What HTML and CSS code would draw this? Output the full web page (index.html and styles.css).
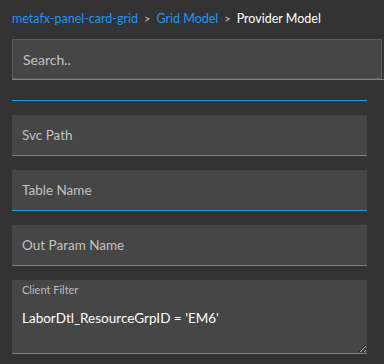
FILE: index.html
```html
<!DOCTYPE html>
<html lang="en">

<head>
    <meta name="viewport" content="width=device-width, initial-scale=1">
    <link rel="stylesheet" href="styles.css">
</head>

<body>

    <!-- Breadcrumb trail -->
    <div class="crumbs">
        <a href="#" class="crumb-link">metafx-panel-card-grid</a>
        <span class="crumb-sep">&gt;</span>
        <a href="#" class="crumb-link">Grid Model</a>
        <span class="crumb-sep">&gt;</span>
        <span class="crumb-current">Provider Model</span>
    </div>

    <!-- Search box -->
    <div class="search-wrap">
        <input type="text" class="search" placeholder="Search..">
    </div>

    <!-- Provider fields -->
    <div class="fields">
        <div class="empty-field"></div>
        <input type="text" class="field" placeholder="Svc Path">
        <input type="text" class="field" placeholder="Table Name">
        <input type="text" class="field" placeholder="Out Param Name">

        <div class="area-field">
            <label class="area-label" for="clientFilter">Client Filter</label>
            <textarea id="clientFilter" class="area">LaborDtl_ResourceGrpID = 'EM6'</textarea>
        </div>
    </div>

</body>

</html>
```

FILE: styles.css
```css
body {
    font-family: "Source Sans Pro", "Lato", "Noto Sans", sans-serif;
    margin: 0;
    padding: 0 17px 0 12px;
    background-color: #333333;
    color: #c4c4c4;
}

* {
    box-sizing: border-box;
}

/* Breadcrumb trail */
.crumbs {
    display: flex;
    align-items: center;
    gap: 6px;
    height: 35px;
    padding-top: 1px;
    font-size: 12.5px;
}

.crumb-link {
    color: #2196f3;
    text-decoration: none;
}

.crumb-sep {
    color: #c4c4c4;
    font-size: 11px;
}

.crumb-current {
    color: #ffffff;
}

/* Search box */
.search-wrap {
    margin-top: 4px;
    margin-right: -17px;
    border-bottom: 1px solid #1e9be9;
}

.search {
    display: block;
    width: 370px;
    height: 40px;
    padding: 0 10px;
    border: 1px solid #5c5c5c;
    background-color: #464646;
    color: #c4c4c4;
    font-family: inherit;
    font-size: 14px;
    outline: none;
}

.search::placeholder,
.field::placeholder {
    color: #c2c2c2;
}

/* Provider fields */
.fields {
    display: flex;
    flex-direction: column;
    gap: 14px;
    margin-top: 20px;
}

.empty-field {
    border-bottom: 1px solid #1e9be9;
}

.field {
    display: block;
    width: 100%;
    height: 41px;
    padding: 0 10px;
    border: none;
    border-bottom: 1px solid #1e9be9;
    background-color: #464646;
    color: #c4c4c4;
    font-family: inherit;
    font-size: 13.5px;
    outline: none;
}

.area-field {
    display: flex;
    flex-direction: column;
    height: 74px;
    background-color: #464646;
    border-bottom: 1px solid #1e9be9;
}

.area-label {
    padding: 3px 10px 0;
    font-size: 11px;
    color: #bdbdbd;
}

.area {
    flex: 1;
    padding: 14px 10px 0;
    border: none;
    background: transparent;
    color: #ffffff;
    font-family: inherit;
    font-size: 13.5px;
    outline: none;
    resize: vertical;
}
```
